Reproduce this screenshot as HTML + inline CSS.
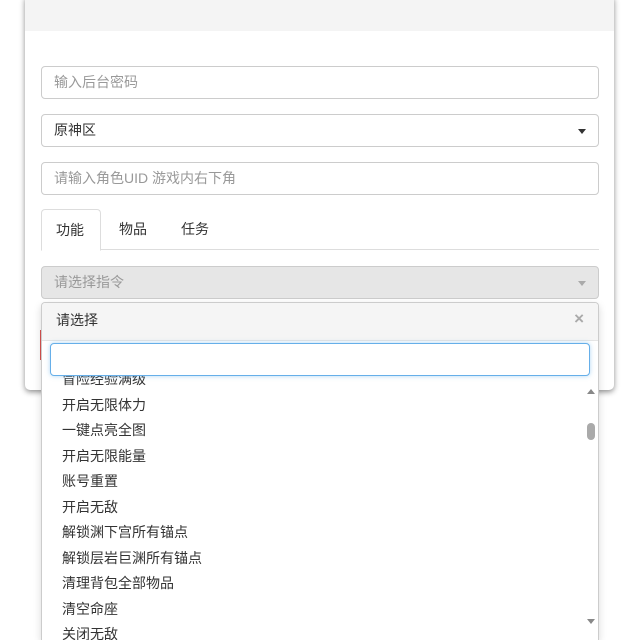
<!DOCTYPE html>
<html style="height:640px;overflow:hidden"><head><meta charset="utf-8"><style>
*{box-sizing:border-box;margin:0;padding:0}
body{width:640px;height:640px;background:#fff;font-family:"Liberation Sans","Noto Sans CJK SC",sans-serif;font-size:14px;color:#333;position:relative;overflow:hidden}
.card{position:absolute;left:25px;top:-5px;width:589px;height:395px;background:#fff;border-radius:5px;box-shadow:0 2px 6px rgba(0,0,0,.45)}
.hd{position:absolute;left:25px;top:0;width:589px;height:31px;background:#f4f4f4}
.inp{position:absolute;left:41px;width:558px;height:33px;border:1px solid #ccc;border-radius:4px;padding:0 12px;line-height:31px;color:#999;background:#fff}
.tabs{position:absolute;left:41px;top:209px;width:558px;height:41px;border-bottom:1px solid #ddd}
.tab{position:absolute;top:0;height:41px;line-height:40px;padding:0 16px;white-space:nowrap}
.caret{position:absolute;right:12px;top:14px;border-left:4px solid transparent;border-right:4px solid transparent;border-top:5px solid #333}
.dd{position:absolute;left:41px;top:302px;width:558px;height:338px;background:#fff;border:1px solid #ccc;border-bottom:none;border-radius:4px 4px 0 0;box-shadow:0 3px 8px rgba(0,0,0,.15);overflow:hidden}
.ddh{height:38px;background:#f5f5f5;border-bottom:1px solid #e5e5e5;padding-left:14px;line-height:34px;color:#333}
.x{position:absolute;right:14px;top:6px;color:#aaa;font-size:17px;font-weight:bold;line-height:20px}
.search{position:absolute;left:8px;top:40px;width:540px;height:33px;border:1px solid #66afe9;border-radius:4px;box-shadow:0 0 5px rgba(102,175,233,.5);background:#fff}
.list{position:absolute;left:20px;top:64px}
.list div{height:25.5px;line-height:25.5px;color:#333}
.sb{position:absolute;right:3px;top:120px;width:8px;height:17px;background:#aaa;border-radius:4px}
</style></head><body>
<div class="card"></div>
<div class="hd"></div>
<div class="inp" style="top:66px">输入后台密码</div>
<div class="inp" style="top:114px;color:#333">原神区<span class="caret"></span></div>
<div class="inp" style="top:162px">请输入角色UID 游戏内右下角</div>
<div class="tabs">
<div class="tab" style="left:0;width:60px;padding:0 14px;border:1px solid #ddd;border-bottom:1px solid #fff;border-radius:4px 4px 0 0;background:#fff;height:42px">功能</div>
<div class="tab" style="left:62px">物品</div>
<div class="tab" style="left:124px">任务</div>
</div>
<div class="inp" style="top:266px;background:#e6e6e6;color:#999">请选择指令<span class="caret" style="border-top-color:#aaa"></span></div>
<div style="position:absolute;left:40px;top:330px;width:2px;height:30px;background:#d9534f"></div>
<div class="dd">
<div class="ddh">请选择<span class="x">×</span></div>
<div class="list">
<div>冒险经验满级</div>
<div>开启无限体力</div>
<div>一键点亮全图</div>
<div>开启无限能量</div>
<div>账号重置</div>
<div>开启无敌</div>
<div>解锁渊下宫所有锚点</div>
<div>解锁层岩巨渊所有锚点</div>
<div>清理背包全部物品</div>
<div>清空命座</div>
<div>关闭无敌</div>
</div>
<div class="search"></div>
<div style="position:absolute;right:3px;top:86px;border-left:4px solid transparent;border-right:4px solid transparent;border-bottom:5px solid #888"></div>
<div class="sb"></div>
<div style="position:absolute;right:3px;top:316px;border-left:4px solid transparent;border-right:4px solid transparent;border-top:5px solid #888"></div>
</div>
</body></html>
